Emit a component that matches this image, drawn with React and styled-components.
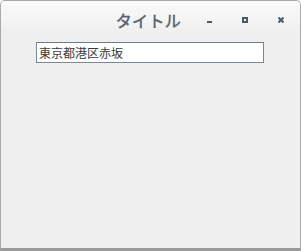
import React, { useEffect, useRef } from 'react'
import styled, { createGlobalStyle } from 'styled-components'

const Global = createGlobalStyle`
  html, body { margin: 0; padding: 0; background: #ffffff; }
  body { width: 301px; height: 251px; overflow: hidden; }
`

function App() {
  const fieldRef = useRef(null)

  useEffect(() => {
    // caret sits before the first character, like the focused field in the shot
    const el = fieldRef.current
    if (el) {
      el.focus()
      el.setSelectionRange(0, 0)
    }
  }, [])

  return (
    <>
      <Global />
      <Frame>
        <TitleBar>
          <Title>タイトル</Title>
          <Controls>
            <CtrlButton aria-label="minimize" $drop={4}>
              <svg width="5" height="2" viewBox="0 0 5 2"><rect width="5" height="2" fill="#4b5a66" /></svg>
            </CtrlButton>
            <CtrlButton aria-label="maximize">
              <svg width="6" height="6" viewBox="0 0 6 6">
                <rect x="1" y="1" width="4" height="4" fill="none" stroke="#4b5a66" strokeWidth="2" />
              </svg>
            </CtrlButton>
            <CtrlButton aria-label="close">
              <svg width="6" height="6" viewBox="0 0 6 6">
                <path d="M0.5 0.5 L5.5 5.5 M5.5 0.5 L0.5 5.5" stroke="#4b5a66" strokeWidth="2" />
              </svg>
            </CtrlButton>
          </Controls>
        </TitleBar>
        <Body>
          <Field ref={fieldRef} defaultValue="東京都港区赤坂" />
        </Body>
      </Frame>
    </>
  )
}

export default App

const Frame = styled.div`
  box-sizing: border-box;
  width: 301px;
  height: 251px;
  border: 1px solid #a9a9a9;
  border-bottom: 3px solid #9a9a9a;
  border-radius: 5px 5px 0 0;
  background: #efefef;
  display: flex;
  flex-direction: column;
  overflow: hidden;
`
const TitleBar = styled.div`
  height: 35px;
  display: flex;
  align-items: center;
  background: linear-gradient(#fafafa, #eeeeee);
  padding-top: 1px;
`
const Title = styled.div`
  flex: 1;
  text-align: right;
  padding-right: 10px;
  font-family: "Noto Sans CJK JP", sans-serif;
  font-size: 16px;
  font-weight: 400;
  -webkit-text-stroke: 0.45px #56636e;
  letter-spacing: 0.3px;
  color: #56636e;
`
const Controls = styled.div`
  display: flex;
  align-items: center;
  margin-right: 1px;
`
const CtrlButton = styled.div`
  width: 36px;
  height: 20px;
  display: flex;
  align-items: center;
  justify-content: center;
  padding-top: ${p => (p.$drop || 0)}px;
  box-sizing: border-box;
`
const Body = styled.div`
  flex: 1;
  padding: 5px 0 0 35px;
`
const Field = styled.input`
  box-sizing: border-box;
  width: 228px;
  height: 21px;
  border: 1px solid #7a8794;
  border-top-color: #6e7b88;
  background: #fff;
  padding: 0 0 0 2px;
  font-family: "Noto Sans CJK JP", sans-serif;
  font-size: 12px;
  color: #3a3a3a;
  caret-color: #222;
  outline: none;
`
